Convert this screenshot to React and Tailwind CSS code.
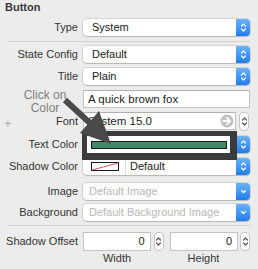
const UpDown = ({ color = "#fff" }) => (
  <svg width="7" height="11" viewBox="0 0 7 11" fill="none" stroke={color} strokeWidth="1.2" strokeLinecap="round" strokeLinejoin="round">
    <path d="M1.5 4 L3.5 2 L5.5 4" />
    <path d="M1.5 7 L3.5 9 L5.5 7" />
  </svg>
);

const Down = () => (
  <svg width="7" height="11" viewBox="0 0 7 11" fill="none" stroke="#fff" strokeWidth="1.3" strokeLinecap="round" strokeLinejoin="round">
    <path d="M1.5 4.5 L3.5 6.5 L5.5 4.5" />
  </svg>
);

function Popup({ children, down, pad = "pl-[9px]" }) {
  return (
    <div className="flex h-[17px] w-[167px] rounded-[4px] bg-white overflow-hidden shadow-[0_0_0_1px_rgba(0,0,0,0.1),0_1px_1px_rgba(0,0,0,0.14)]">
      <div className={`flex-1 flex items-center ${pad}`}>{children}</div>
      <div className="w-[14px] bg-gradient-to-b from-[#6ab2fb] to-[#1c7cf0] flex items-center justify-center">
        {down ? <Down /> : <UpDown />}
      </div>
    </div>
  );
}

function Stepper() {
  return (
    <div className="w-[10px] h-[19px] rounded-[4px] bg-white border border-[#c6c6c6] flex items-center justify-center">
      <UpDown color="#555" />
    </div>
  );
}

function Row({ label, children, className = "" }) {
  return (
    <div className={`flex items-center ${className}`}>
      <div className="w-[78px] text-right text-[#353535] whitespace-nowrap">{label}</div>
      <div className="ml-[5px] w-[167px]">{children}</div>
    </div>
  );
}

export default function App() {
  return (
    <div className="relative w-[258px] h-[269px] overflow-hidden bg-[#ececec] font-['Liberation_Sans',Arial,sans-serif] text-[11px] leading-[13px] text-[#222]">
      <div className="pl-[5px] h-[15px] pt-[1px] font-bold text-[#3a3a3a]">Button</div>

      <Row label="Type" className="mt-[4px] h-[17px]">
        <Popup>System</Popup>
      </Row>
      <div className="mt-[5px] ml-[7px] w-[243px] h-px bg-[#d2d2d2]" />

      <Row label="State Config" className="mt-[4px] h-[17px]">
        <Popup>Default</Popup>
      </Row>
      <Row label="Title" className="mt-[5px] h-[17px]">
        <Popup>Plain</Popup>
      </Row>

      <Row label="" className="mt-[5px] h-[18px]">
        <div className="h-[18px] bg-white border border-[#c2c2c2] border-t-[#b0b0b0] flex items-center pl-[4px] text-[11.5px]">
          A quick brown fox
        </div>
      </Row>

      <Row label="Font" className="mt-[4px] h-[18px]">
        <div className="flex items-center gap-[3px]">
          <div className="w-[153px] h-[18px] bg-white border border-[#c2c2c2] border-t-[#b0b0b0] flex items-center pl-[4px] pr-[1px] text-[11.5px]">
            <span className="flex-1">System 15.0</span>
            <svg width="14" height="14" viewBox="0 0 14 14">
              <circle cx="7" cy="7" r="6.5" fill="#c2c2c2" />
              <path d="M3.5 7 H10 M7 4 L10 7 L7 10" stroke="#fff" strokeWidth="1.8" fill="none" strokeLinecap="round" strokeLinejoin="round" />
            </svg>
          </div>
          <Stepper />
        </div>
      </Row>

      <Row label="Text Color" className="mt-[6px] h-[17px]">
        <Popup pad="pl-[8px] pr-[9px]">
          <div className="w-[136px] h-[8px] bg-[#3f8a6a] border border-[#1c1c1c]" />
        </Popup>
      </Row>

      <Row label="Shadow Color" className="mt-[5px] h-[17px]">
        <Popup pad="pl-[8px]">
          <svg width="28" height="9" viewBox="0 0 28 9" className="shrink-0">
            <rect x="0.5" y="0.5" width="27" height="8" fill="#fff" stroke="#1c1c1c" />
            <path d="M1 8 L27 1" stroke="#d9535f" strokeWidth="1" />
          </svg>
          <div className="ml-[6px] w-px h-[17px] bg-[#dcdcdc]" />
          <span className="ml-[4px]">Default</span>
        </Popup>
      </Row>

      <Row label="Image" className="mt-[8px] h-[17px]">
        <Popup down pad="pl-[6px]">
          <span className="text-[#b8b8b8]">Default Image</span>
        </Popup>
      </Row>
      <Row label="Background" className="mt-[4px] h-[17px]">
        <Popup down pad="pl-[6px]">
          <span className="text-[#b8b8b8]">Default Background Image</span>
        </Popup>
      </Row>

      <div className="mt-[4px] ml-[7px] w-[243px] h-px bg-[#d2d2d2]" />

      <Row label="Shadow Offset" className="mt-[6px] h-[19px]">
        <div className="flex items-center">
          <div className="w-[68px] h-[19px] bg-white border border-[#c2c2c2] flex items-center justify-end pr-[5px]">0</div>
          <div className="ml-[3px]"><Stepper /></div>
          <div className="ml-[6px] w-[69px] h-[19px] bg-white border border-[#c2c2c2] flex items-center justify-end pr-[5px]">0</div>
          <div className="ml-[2px]"><Stepper /></div>
        </div>
      </Row>
      <div className="flex mt-[1px] ml-[83px] text-[#353535]">
        <div className="w-[68px] text-center">Width</div>
        <div className="ml-[18px] w-[69px] text-center">Height</div>
      </div>

      {/* annotation overlay */}
      <div className="absolute left-[20px] top-[89px] w-[50px] text-center text-[12px] leading-[13px] text-[#808080]">
        Click on<br />Color
      </div>
      <div className="absolute left-[4px] top-[117px] text-[13px] text-[#b0b0b0]">+</div>
      <div className="absolute left-[82px] top-[131px] w-[155px] h-[29px] border-[5px] border-r-[7px] border-b-[7px] border-[#3b3b3b]" />
      <svg className="absolute inset-0 pointer-events-none" width="258" height="269" viewBox="0 0 258 269">
        <line x1="65" y1="100" x2="92" y2="125" stroke="#4a4a4a" strokeWidth="6" />
        <polygon points="80,133 99,111 111,144" fill="#4a4a4a" />
      </svg>
    </div>
  );
}
